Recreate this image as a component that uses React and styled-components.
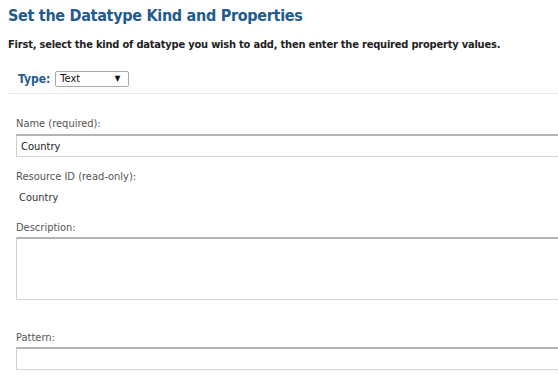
import React, { useState } from 'react';
import styled, { createGlobalStyle } from 'styled-components';

const GlobalStyle = createGlobalStyle`
    html, body {
        margin: 0;
        padding: 0;
        background: #ffffff;
        overflow: hidden;
    }
    body {
        font-family: "DejaVu Sans Condensed", "DejaVu Sans", Verdana, sans-serif;
    }
`;

const Page = styled.div`
    width: 558px;
    height: 388px;
    padding: 6px 0 0 8px;
    box-sizing: border-box;
    overflow: hidden;
`;

const Title = styled.h1`
    margin: 0;
    font-size: 16px;
    line-height: 20px;
    font-weight: bold;
    letter-spacing: -0.3px;
    color: #1f5b8e;
`;

const Intro = styled.p`
    margin: 12px 0 0;
    font-size: 11px;
    line-height: 14px;
    font-weight: bold;
    letter-spacing: -0.2px;
    color: #222222;
`;

const TypeRow = styled.div`
    display: flex;
    align-items: center;
    gap: 5px;
    margin-top: 19px;
    padding: 0 0 6px 10px;
    border-bottom: 1px solid #e4eaef;
`;

const TypeLabel = styled.label`
    font-size: 12px;
    font-weight: bold;
    color: #1f5b8e;
`;

const SelectBox = styled.div`
    width: 74px;
    height: 16px;
    box-sizing: border-box;
    border: 1px solid #a9a9a9;
    border-radius: 2px;
    padding: 0 0 0 4px;
    font-size: 11px;
    line-height: 14px;
    color: #111111;
    display: flex;
    align-items: center;
    justify-content: space-between;
`;

const Arrow = styled.span`
    font-size: 8px;
    margin-right: 8px;
    color: #111111;
`;

const Fields = styled.div`
    padding: 23px 0 0 8px;
`;

const Field = styled.div`
    margin-bottom: ${p => p.$gap || 16}px;
`;

const FieldLabel = styled.div`
    font-size: 11px;
    line-height: 14px;
    color: #555555;
    margin-bottom: ${p => p.$gap ?? 2}px;
`;

const TextInput = styled.input`
    display: block;
    width: 560px;
    height: 23px;
    box-sizing: border-box;
    margin: 0;
    padding: 0 4px;
    border: 1px solid #d4d4d4;
    border-top: 2px solid #b4b4b4;
    border-left-color: #cfcfcf;
    font-family: inherit;
    font-size: 11px;
    color: #222222;
    outline: none;
    background: #ffffff;
`;

const TextArea = styled.textarea`
    display: block;
    width: 560px;
    height: 63px;
    box-sizing: border-box;
    margin: 0;
    padding: 3px 4px;
    border: 1px solid #d4d4d4;
    border-top: 2px solid #b4b4b4;
    border-left-color: #cfcfcf;
    font-family: inherit;
    font-size: 11px;
    resize: none;
    outline: none;
`;

const ReadOnly = styled.div`
    font-size: 11px;
    line-height: 14px;
    color: #333333;
    padding-left: 3px;
    margin-top: 7px;
`;

const App = () => {
    const [name, setName] = useState('Country');
    const [description, setDescription] = useState('');
    const [pattern, setPattern] = useState('');

    return (
        <>
            <GlobalStyle />
            <Page>
                <Title>Set the Datatype Kind and Properties</Title>
                <Intro>
                    First, select the kind of datatype you wish to add, then enter the required property values.
                </Intro>
                <TypeRow>
                    <TypeLabel>Type:</TypeLabel>
                    <SelectBox>
                        <span>Text</span>
                        <Arrow>▼</Arrow>
                    </SelectBox>
                </TypeRow>
                <Fields>
                    <Field $gap={13}>
                        <FieldLabel $gap={3}>Name (required):</FieldLabel>
                        <TextInput value={name} onChange={e => setName(e.target.value)} />
                    </Field>
                    <Field $gap={16}>
                        <FieldLabel>Resource ID (read-only):</FieldLabel>
                        <ReadOnly>{name}</ReadOnly>
                    </Field>
                    <Field $gap={31}>
                        <FieldLabel>Description:</FieldLabel>
                        <TextArea value={description} onChange={e => setDescription(e.target.value)} />
                    </Field>
                    <Field>
                        <FieldLabel>Pattern:</FieldLabel>
                        <TextInput value={pattern} onChange={e => setPattern(e.target.value)} />
                    </Field>
                </Fields>
            </Page>
        </>
    );
};

export default App;
